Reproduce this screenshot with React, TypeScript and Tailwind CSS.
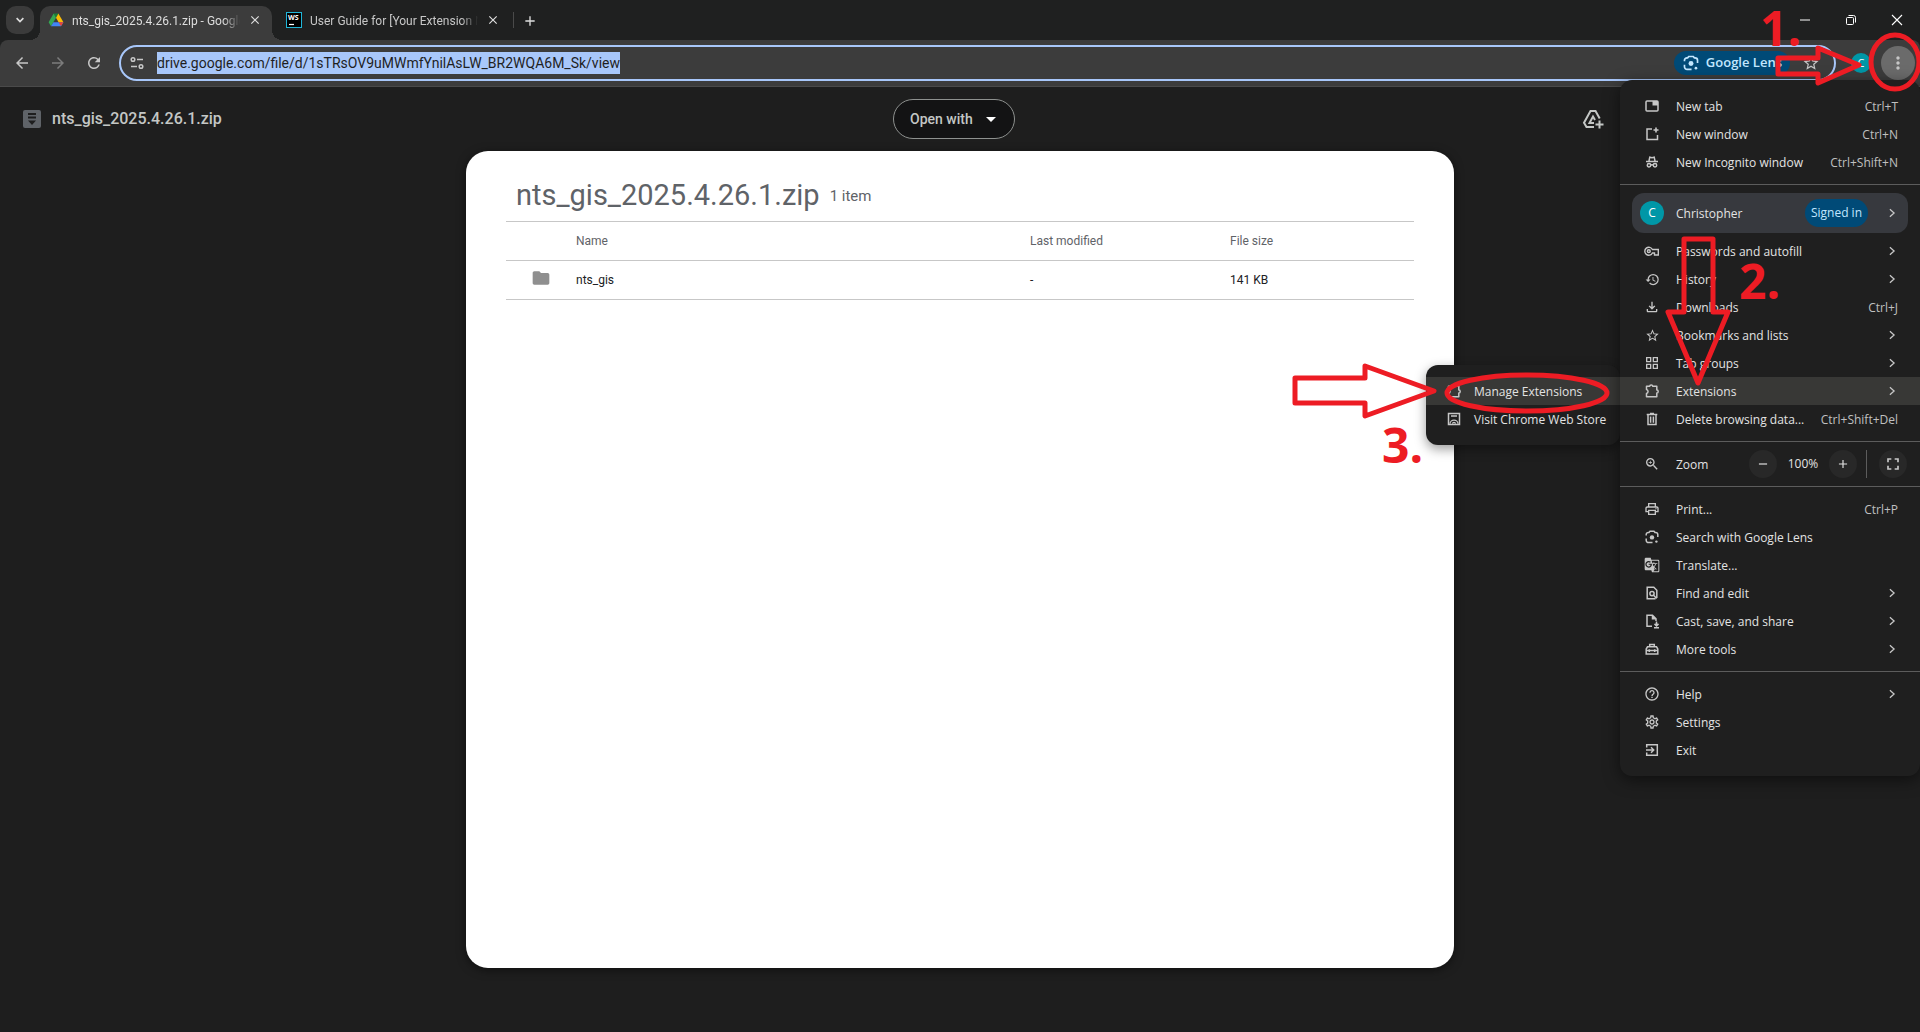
import React from "react";
import type { ReactNode } from "react";
import {
  MdHistory,
  MdOutlineFileDownload,
  MdStarBorder,
  MdOutlineGridView,
  MdZoomIn,
  MdOutlinePrint,
  MdGTranslate,
  MdHelpOutline,
  MdOutlineSettings,
  MdAdd,
  MdRemove,
  MdClose,
  MdArrowBack,
  MdArrowForward,
  MdRefresh,
  MdMoreVert,
  MdFullscreen,
  MdFolder,
  MdArrowDropDown,
} from "react-icons/md";

type SvgProps = { className?: string; children: ReactNode };

function Glyph({ className = "size-4", children }: SvgProps) {
  return (
    <svg viewBox="0 0 16 16" className={className} fill="none" stroke="currentColor" strokeWidth="1.5" aria-hidden="true">
      {children}
    </svg>
  );
}

const NewTabIcon = () => (
  <Glyph>
    <rect x="2" y="3" width="12" height="10" rx="1" />
    <path d="M8.500 3h5.500v4.500H8.500z" fill="currentColor" stroke="none" />
  </Glyph>
);

const NewWindowIcon = () => (
  <Glyph>
    <path d="M8 3H3v10.500h10.500V9" />
    <path d="M12 1.500v5M9.500 4h5" strokeWidth="1.600" />
  </Glyph>
);

const IncognitoIcon = () => (
  <Glyph>
    <path d="M5 7 5.800 3.200 8 3.700l2.200-.5L11 7M2 7.400h12" />
    <circle cx="5" cy="11.300" r="1.700" />
    <circle cx="11" cy="11.300" r="1.700" />
    <path d="M6.700 11q1.300-.7 2.600 0" />
  </Glyph>
);

const KeyIcon = () => (
  <Glyph>
    <path d="M8.400 6.500A4 4 0 1 0 8.400 10h2.100v2h3.800V6.500z" strokeWidth="1.400" />
    <circle cx="4.800" cy="8.200" r="1.400" />
  </Glyph>
);

const PuzzleIcon = () => (
  <Glyph>
    <path d="M2.500 3.200h3.200a1.500 1.300 0 0 1 3 0h4.100v3.700a1.400 1.600 0 0 1 0 3.200v3.700H2.500v-3.300a2 2 0 0 0 0-3.900z" strokeLinejoin="round" />
  </Glyph>
);

const TrashIcon = () => (
  <Glyph>
    <path d="M4 4v9.500h8V4M2.700 3.600h10.600M6 2.400h4" />
    <path d="M6.600 5.500v6.300M9.400 5.500v6.300" />
  </Glyph>
);

const LensIcon = ({ className }: { className?: string }) => (
  <Glyph className={className}>
    <path
      d="M2.200 6.500V5.600A2.200 2.200 0 0 1 4.400 3.400H5L6 2.200h4l1 1.200h.6a2.200 2.200 0 0 1 2.200 2.200V8M2.200 9.500v1.800a2.300 2.300 0 0 0 2.300 2.300H8.500"
      strokeWidth="1.500"
    />
    <circle cx="8" cy="8.400" r="2.200" fill="currentColor" stroke="none" />
    <circle cx="12.400" cy="12.600" r="1.200" fill="currentColor" stroke="none" />
  </Glyph>
);

const FindIcon = () => (
  <Glyph>
    <path d="M12.800 13V5.200L9.800 2.200H3.200v11.600h8.300" />
    <circle cx="8" cy="8.600" r="2.100" />
    <path d="m9.600 10.200 3 3.200" />
  </Glyph>
);

const SaveShareIcon = () => (
  <Glyph>
    <path d="M8 13.200H3V2.200h5.500L12 5.700V8M8.500 2.200v3.500H12" />
    <path d="M12.500 8.500v4.200m-2-1.800 2 2 2-2M10 14.800h5" />
  </Glyph>
);

const ToolboxIcon = () => (
  <Glyph>
    <path d="M2.200 13V8l1.300-2.200h9L13.800 8v5zM5.700 5.500V3.500h4.600v2M2.200 9.600h11.600M5.300 8.300v2.600M10.700 8.300v2.600" />
  </Glyph>
);

const ExitIcon = () => (
  <Glyph>
    <path d="M2.700 5.500V2.700h10.600v10.600H2.700v-2.800M2 8h7.500M7 5.300 9.700 8 7 10.700" />
  </Glyph>
);

const StoreIcon = () => (
  <Glyph>
    <rect x="2.500" y="2.500" width="11" height="11" />
    <path d="M5 5h6M4 12.800a4 3.600 0 0 1 8 0M6.600 12.800a1.400 1.400 0 0 1 2.800 0" strokeWidth="1.300" />
  </Glyph>
);

const Chevron = () => (
  <Glyph className="size-3">
    <path d="m5.200 3 5.600 5-5.600 5" strokeWidth="1.700" />
  </Glyph>
);

const DriveLogo = () => (
  <svg viewBox="0 0 16 16" className="size-4 shrink-0" aria-hidden="true">
    <path d="M5.600 1.500h4.800L8 5.700z" fill="#188038" />
    <path d="M5.600 1.500 8 5.700 3 14.300.6 10.200z" fill="#34a853" />
    <path d="M10.400 1.500 15.400 10.200h-4.800L8 5.700z" fill="#fbbc04" />
    <path d="M5.400 10.200h10L13 14.300H3z" fill="#4285f4" />
    <path d="M10.600 10.200h4.800L13 14.300z" fill="#ea4335" />
  </svg>
);

const WebStormLogo = () => (
  <svg viewBox="0 0 16 16" className="size-4 shrink-0" aria-hidden="true">
    <rect x=".5" y=".5" width="15" height="15" fill="#000" stroke="#20b6d8" />
    <text x="2" y="8" fontSize="7" fontWeight="700" fill="#fff" fontFamily="Open Sans, sans-serif">WS</text>
    <path d="M3 12.500h5" stroke="#fff" strokeWidth="1.200" />
  </svg>
);

type Row = { label: string; icon: ReactNode; keys?: string; sub?: boolean; active?: boolean };

const topRows: Row[] = [
  { label: "New tab", icon: <NewTabIcon />, keys: "Ctrl+T" },
  { label: "New window", icon: <NewWindowIcon />, keys: "Ctrl+N" },
  { label: "New Incognito window", icon: <IncognitoIcon />, keys: "Ctrl+Shift+N" },
];

const profileRows: Row[] = [
  { label: "Passwords and autofill", icon: <KeyIcon />, sub: true },
  { label: "History", icon: <MdHistory className="size-[15px]" />, sub: true },
  { label: "Downloads", icon: <MdOutlineFileDownload className="size-4" />, keys: "Ctrl+J" },
  { label: "Bookmarks and lists", icon: <MdStarBorder className="size-[15px]" />, sub: true },
  { label: "Tab groups", icon: <MdOutlineGridView className="size-4" />, sub: true },
  { label: "Extensions", icon: <PuzzleIcon />, sub: true, active: true },
  { label: "Delete browsing data...", icon: <TrashIcon />, keys: "Ctrl+Shift+Del" },
];

const toolRows: Row[] = [
  { label: "Print...", icon: <MdOutlinePrint className="size-4" />, keys: "Ctrl+P" },
  { label: "Search with Google Lens", icon: <LensIcon /> },
  { label: "Translate...", icon: <MdGTranslate className="size-4" /> },
  { label: "Find and edit", icon: <FindIcon />, sub: true },
  { label: "Cast, save, and share", icon: <SaveShareIcon />, sub: true },
  { label: "More tools", icon: <ToolboxIcon />, sub: true },
];

const helpRows: Row[] = [
  { label: "Help", icon: <MdHelpOutline className="size-4" />, sub: true },
  { label: "Settings", icon: <MdOutlineSettings className="size-4" /> },
  { label: "Exit", icon: <ExitIcon /> },
];

function MenuRow({ row }: { row: Row }) {
  return (
    <button
      type="button"
      className={`flex h-7 w-full items-center pr-[22px] pl-6 text-left ${row.active ? "bg-[#383836]" : ""}`}
    >
      <span className="mr-4 flex w-4 shrink-0 justify-center text-[#c7c7c7]">{row.icon}</span>
      <span className="pt-0.5 whitespace-nowrap">{row.label}</span>
      {row.keys && <span className="ml-auto pt-0.5 whitespace-nowrap text-[#c0c0c0]">{row.keys}</span>}
      {row.sub && <span className="ml-auto text-[#c7c7c7]"><Chevron /></span>}
    </button>
  );
}

function MenuGroup({ rows }: { rows: Row[] }) {
  return (
    <div>
      {rows.map((row) => (
        <MenuRow key={row.label} row={row} />
      ))}
    </div>
  );
}

const Divider = () => <hr className="my-2 border-t border-[#5c5c5c]" />;

function BrowserMenu() {
  return (
    <div className="absolute top-20 right-0 z-20 w-[300px] rounded-xl bg-[#1f1f1f] py-3 text-xs text-[#e3e3e3] shadow-[0_4px_16px_rgba(0,0,0,0.5)]">
      <MenuGroup rows={topRows} />
      <Divider />
      <button type="button" className="mx-3 mb-1 flex h-10 w-[276px] items-center rounded-xl bg-[#37393e] pr-[10px] pl-2">
        <span className="mr-3 flex size-6 items-center justify-center rounded-full bg-[#0097a7] text-white">C</span>
        <span className="pt-0.5">Christopher</span>
        <span className="mr-[18px] ml-auto flex h-7 items-center rounded-full bg-[#004a77] px-1.5 text-[#c2e7ff]">Signed in</span>
        <span className="text-[#c7c7c7]"><Chevron /></span>
      </button>
      <MenuGroup rows={profileRows} />
      <Divider />
      <div className="flex h-7 items-center pr-[13px] pl-6">
        <MdZoomIn className="mr-4 size-4 text-[#c7c7c7]" />
        <span className="pt-0.5">Zoom</span>
        <button type="button" aria-label="Zoom out" className="ml-auto flex size-7 items-center justify-center rounded-full bg-[#282828]">
          <MdRemove className="size-3.5" />
        </button>
        <span className="w-[52px] text-center">100%</span>
        <button type="button" aria-label="Zoom in" className="flex size-7 items-center justify-center rounded-full bg-[#282828]">
          <MdAdd className="size-3.5" />
        </button>
        <span className="mr-3 ml-[9px] h-7 w-px bg-[#5c5c5c]" />
        <button type="button" aria-label="Full screen" className="flex size-7 items-center justify-center rounded-full bg-[#282828] text-[#c7c7c7]">
          <MdFullscreen className="size-5" />
        </button>
      </div>
      <Divider />
      <MenuGroup rows={toolRows} />
      <Divider />
      <MenuGroup rows={helpRows} />
    </div>
  );
}

function ExtensionsSubmenu() {
  return (
    <div className="absolute top-[365px] right-[300px] z-20 w-[194px] rounded-xl bg-[#1f1f1f] py-3 text-xs text-[#e3e3e3] shadow-[0_4px_12px_rgba(0,0,0,0.4)] [&_button]:pr-0 [&_button]:pl-5 [&_button>span:first-child]:mr-3">
      <MenuRow row={{ label: "Manage Extensions", icon: <PuzzleIcon />, active: true }} />
      <MenuRow row={{ label: "Visit Chrome Web Store", icon: <StoreIcon /> }} />
    </div>
  );
}

function TabStrip() {
  return (
    <div className="flex h-10 items-end bg-[#1f2020] font-['Roboto',sans-serif] text-xs text-[#dedede]">
      <button type="button" aria-label="Search tabs" className="mb-1.5 ml-1.5 flex size-7 items-center justify-center rounded-[10px] bg-[#3b3b3b]">
        <Glyph className="size-3"><path d="m3.500 5.500 4.500 4.500 4.500-4.500" strokeWidth="2.200" /></Glyph>
      </button>
      <div className="relative ml-1.5 flex h-[34px] w-[232px] items-center rounded-t-[10px] bg-[#3c3c3c] pb-1.5 pl-2">
        <span className="absolute bottom-0 left-[-10px] size-[10px] bg-[radial-gradient(circle_at_0_0,transparent_10px,#3c3c3c_10px)]" />
        <span className="absolute right-[-10px] bottom-0 size-[10px] bg-[radial-gradient(circle_at_100%_0,transparent_10px,#3c3c3c_10px)]" />
        <DriveLogo />
        <span className="ml-2 w-[168px] overflow-hidden pt-0.5 whitespace-nowrap [mask-image:linear-gradient(to_right,#000_90%,transparent)]">
          nts_gis_2025.4.26.1.zip - Google Drive
        </span>
        <button type="button" aria-label="Close tab" className="ml-2"><MdClose className="size-3.5" /></button>
      </div>
      <div className="ml-3.5 flex h-[34px] w-[227px] items-center pb-1.5">
        <WebStormLogo />
        <span className="ml-2 w-[168px] overflow-hidden pt-0.5 whitespace-nowrap text-[#c7c7c7] [mask-image:linear-gradient(to_right,#000_90%,transparent)]">
          User Guide for [Your Extension Name]
        </span>
        <button type="button" aria-label="Close tab" className="ml-2"><MdClose className="size-3.5" /></button>
      </div>
      <span className="mb-3 h-4 w-px bg-[#4a4a4a]" />
      <button type="button" aria-label="New tab" className="mb-[11px] ml-2"><MdAdd className="size-4" /></button>
      <div className="mb-3 ml-auto flex items-center text-white">
        <button type="button" aria-label="Minimize" className="flex w-[46px] justify-center">
          <Glyph className="size-4"><path d="M3 8h10" strokeWidth="1" /></Glyph>
        </button>
        <button type="button" aria-label="Restore" className="flex w-[46px] justify-center">
          <Glyph className="size-4">
            <rect x="3.500" y="5.500" width="7" height="7" rx="1" strokeWidth="1" />
            <path d="M5.500 3.500h5a2 2 0 0 1 2 2v5" strokeWidth="1" />
          </Glyph>
        </button>
        <button type="button" aria-label="Close window" className="flex w-[46px] justify-center">
          <Glyph className="size-4"><path d="m3 3 10 10M13 3 3 13" strokeWidth="1.100" /></Glyph>
        </button>
      </div>
    </div>
  );
}

function Toolbar() {
  return (
    <div className="bg-[#1f2020]">
      <div className="flex h-[47px] items-center rounded-t-lg border-b border-[#4a4a4a] bg-[#3c3c3c] pr-[5px] pl-[13px] text-[#c7c7c7]">
        <button type="button" aria-label="Back" className="mr-[18px]"><MdArrowBack className="size-[18px]" /></button>
        <button type="button" aria-label="Forward" className="mr-[18px] text-[#7c7c7c]"><MdArrowForward className="size-[18px]" /></button>
        <button type="button" aria-label="Reload" className="mr-4"><MdRefresh className="size-[18px]" /></button>
        <div className="flex h-9 flex-1 items-center rounded-full border-2 border-[#a8c7fa] pr-3.5 pl-2">
          <button type="button" aria-label="Site information" className="mr-3">
            <Glyph className="size-4">
              <circle cx="4" cy="4.500" r="1.800" />
              <path d="M8 4.500h6M2 11.500h6" />
              <circle cx="12" cy="11.500" r="1.800" />
            </Glyph>
          </button>
          <input
            aria-label="Address"
            className="field-sizing-content h-[22px] bg-[#a8c7fa] font-['Roboto',sans-serif] text-sm text-[#1f1f1f] outline-none"
            defaultValue="drive.google.com/file/d/1sTRsOV9uMWmfYnilAsLW_BR2WQA6M_Sk/view"
          />
          <button type="button" className="ml-auto flex h-6 items-center gap-1.5 rounded-full bg-[#004a77] px-2 text-[13px] font-semibold text-[#c2e7ff]">
            <LensIcon className="size-[18px]" />
            Google Lens
          </button>
          <button type="button" aria-label="Bookmark this tab" className="ml-3"><MdStarBorder className="size-[18px]" /></button>
        </div>
        <button type="button" aria-label="Profile" className="ml-[15px] flex size-5 items-center justify-center rounded-full bg-[#0097a7] text-[11px] text-white">C</button>
        <button type="button" aria-label="Menu" className="ml-2.5 flex size-[34px] items-center justify-center rounded-full bg-[#6b6b6b] text-[#c7c7c7]">
          <MdMoreVert className="size-5" />
        </button>
      </div>
    </div>
  );
}

function FileHeader() {
  return (
    <header className="grid h-16 shrink-0 grid-cols-3 items-center text-[#c4c7c5]">
      <div className="flex items-center pl-[23px]">
        <svg viewBox="0 0 18 18" className="mr-[11px] size-[18px]" aria-hidden="true">
          <rect width="18" height="18" rx="2" fill="#5f6368" />
          <path d="M5 4h8M5 7.500h8" stroke="#1e1e1e" strokeWidth="1.800" />
          <path d="M5 10.500h8L9 15z" fill="#1e1e1e" />
        </svg>
        <h1 className="text-base font-medium">nts_gis_2025.4.26.1.zip</h1>
      </div>
      <button type="button" className="ml-[253px] flex h-10 w-[122px] items-center rounded-full border border-[#8e918f] bg-[#131314] pl-4 text-sm font-medium">
        Open with
        <MdArrowDropDown className="ml-1.5 size-6 text-white" />
      </button>
      <button type="button" aria-label="Add shortcut to Drive" className="mr-[315px] ml-auto">
        <svg viewBox="0 0 24 24" className="size-6" fill="none" stroke="currentColor" strokeWidth="2" aria-hidden="true">
          <path d="M13 20H5.500L3 15.700 9.500 4h5l4.200 7.500" />
          <path d="M13 16H8.500L12 9.500l2 3.500" />
          <path d="M18.500 13.500v8M14.500 17.500h8" />
        </svg>
      </button>
    </header>
  );
}

function FileCard() {
  return (
    <main className="mx-auto mb-16 w-[988px] max-w-full flex-1 rounded-[22px] bg-white px-10 pt-6 text-[#5f6368] shadow-[0_2px_10px_rgba(0,0,0,0.5)]">
      <div className="flex h-[46px] items-center gap-2.5 pb-1 pl-2.5">
        <h2 className="text-[29px]">nts_gis_2025.4.26.1.zip</h2>
        <span className="text-[15px]">1 item</span>
      </div>
      <table className="w-full table-fixed border-collapse text-left text-xs">
        <thead>
          <tr className="h-[39px] border-y border-[#c7c7c7]">
            <th className="w-[70px]" aria-label="Type" />
            <th className="font-normal">Name</th>
            <th className="w-[200px] font-normal">Last modified</th>
            <th className="w-[184px] font-normal">File size</th>
          </tr>
        </thead>
        <tbody>
          <tr className="h-[39px] border-b border-[#c7c7c7] text-[#202124]">
            <td className="pl-[25px]"><MdFolder className="mb-1 size-5 text-[#8f8f8f]" /></td>
            <td>nts_gis</td>
            <td>-</td>
            <td>141 KB</td>
          </tr>
        </tbody>
      </table>
    </main>
  );
}

/** Red step markers drawn over the browser, anchored to the right edge with the menus. */
function StepMarkers() {
  return (
    <div className="pointer-events-none absolute top-0 right-0 z-30 h-[480px] w-[640px] overflow-hidden text-[48px] leading-none font-bold text-[#ed1c24]">
      <svg viewBox="1280 0 640 480" className="size-full" fill="none" stroke="currentColor" strokeWidth="5" strokeLinejoin="round" aria-hidden="true">
        <path d="M1778 58h40v-10l41 17-41 18v-9h-40z" />
        <ellipse cx="1895" cy="62" rx="24" ry="27" />
        <path d="M1684 239h29v73h15l-30 71-30-71h16z" />
        <path d="M1295 378h70v-12l69 25-69 25v-13h-70z" />
        <ellipse cx="1527" cy="393" rx="80" ry="18" />
      </svg>
      <span className="absolute top-1 left-[480px]">1.</span>
      <span className="absolute top-[257px] left-[459px]">2.</span>
      <span className="absolute top-[421px] left-[102px]">3.</span>
    </div>
  );
}

export default function App() {
  return (
    <div className="relative flex min-h-screen flex-col overflow-hidden bg-[#1e1e1e] font-['Open_Sans',sans-serif]">
      <TabStrip />
      <Toolbar />
      <div className="flex flex-1 flex-col font-['Roboto',sans-serif]">
        <FileHeader />
        <FileCard />
      </div>
      <ExtensionsSubmenu />
      <BrowserMenu />
      <StepMarkers />
    </div>
  );
}
